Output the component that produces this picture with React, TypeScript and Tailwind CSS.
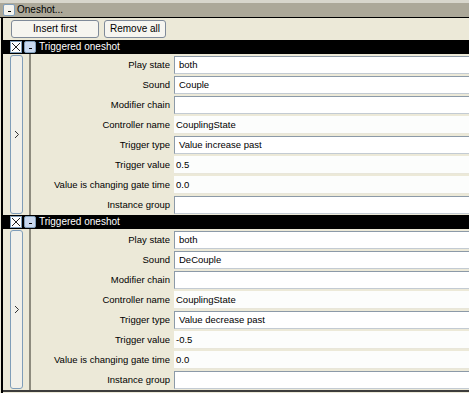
import React from "react";

type Prop = { label: string; value: string; box: boolean };

const sections: Prop[][] = [
  [
    { label: "Play state", value: "both", box: true },
    { label: "Sound", value: "Couple", box: true },
    { label: "Modifier chain", value: "", box: true },
    { label: "Controller name", value: "CouplingState", box: false },
    { label: "Trigger type", value: "Value increase past", box: true },
    { label: "Trigger value", value: "0.5", box: false },
    { label: "Value is changing gate time", value: "0.0", box: false },
    { label: "Instance group", value: "", box: true },
  ],
  [
    { label: "Play state", value: "both", box: true },
    { label: "Sound", value: "DeCouple", box: true },
    { label: "Modifier chain", value: "", box: true },
    { label: "Controller name", value: "CouplingState", box: false },
    { label: "Trigger type", value: "Value decrease past", box: true },
    { label: "Trigger value", value: "-0.5", box: false },
    { label: "Value is changing gate time", value: "0.0", box: false },
    { label: "Instance group", value: "", box: true },
  ],
];

function MinusBox({ blue }: { blue?: boolean }) {
  return (
    <div
      className={
        "w-[12px] h-[12px] flex items-center justify-center rounded-[2px] border " +
        (blue
          ? "border-[#7f9db9] bg-[#c9d8ef]"
          : "border-[#7f9db9] bg-[#f4f3ee]")
      }
    >
      <div className="w-[3px] h-[1px] bg-black mt-[3px]" />
    </div>
  );
}

function CheckX() {
  return (
    <div className="w-[12px] h-[12px] border border-[#7f9db9] bg-white flex items-center justify-center">
      <svg width="10" height="10" viewBox="0 0 10 10">
        <path d="M1 1 L9 9 M9 1 L1 9" stroke="#222" strokeWidth="1" />
      </svg>
    </div>
  );
}

function Row({ p }: { p: Prop }) {
  return (
    <div className="flex h-[20px]">
      <div className="w-[143px] shrink-0 flex items-center justify-end pr-[4px] text-black">
        {p.label}
      </div>
      {p.box ? (
        <div className="flex-1 mt-[1px] h-[18px] bg-white border-t border-l border-[#8c9aa8] border-b-[#c3cbd3] border-b flex items-center pl-[4px]">
          {p.value}
        </div>
      ) : (
        <div className="flex-1 mt-[1px] h-[18px] bg-[#fcfdfc] border-b border-[#e8e6da] flex items-center pl-[2px]">
          {p.value}
        </div>
      )}
    </div>
  );
}

function Section({ props }: { props: Prop[] }) {
  return (
    <div className="flex flex-col">
      <div className="h-[14px] bg-black flex items-center gap-[2px] pl-[7px]">
        <CheckX />
        <MinusBox blue />
        <span className="text-white ml-[1px] text-[10px]">Triggered oneshot</span>
      </div>
      <div className="flex h-[161px]">
        <div className="w-[28px] shrink-0 pl-[7px] py-[1px] border-r-2 border-[#8d8b7e]">
          <div className="w-[13px] h-full rounded-[3px] border border-[#7f9db9] bg-[#f1f0ea] flex items-center justify-center">
            <svg width="6" height="9" viewBox="0 0 6 9">
              <path d="M1 1 L4.5 4.5 L1 8" stroke="#333" strokeWidth="1" fill="none" />
            </svg>
          </div>
        </div>
        <div className="flex-1 flex flex-col pt-[1px]">
          {props.map((p, i) => (
            <Row key={i} p={p} />
          ))}
        </div>
      </div>
    </div>
  );
}

export default function App() {
  return (
    <div
      className="w-[469px] h-[393px] overflow-hidden bg-[#ece9d8] text-[9.5px] leading-none text-black"
      style={{ fontFamily: '"Liberation Sans", Arial, sans-serif' }}
    >
      <div className="h-[3px] bg-[#d8d6cc]" />
      <div className="h-[15px] bg-[#aca899] flex items-center pl-[3px] gap-[2px] border-b border-black">
        <MinusBox />
        <span className="text-[10px]">Oneshot...</span>
      </div>
      <div className="ml-[1px] border-l-[2px] border-black h-[375px] flex flex-col">
        <div className="h-[22px] flex items-center gap-[5px] pl-[8px]">
          <button className="w-[88px] h-[18px] rounded-[3px] border border-[#7f8a99] bg-[#f6f5f0] text-[10px]">
            Insert first
          </button>
          <button className="w-[62px] h-[18px] rounded-[3px] border border-[#7f8a99] bg-[#f6f5f0] text-[10px]">
            Remove all
          </button>
        </div>
        {sections.map((s, i) => (
          <Section key={i} props={s} />
        ))}
        <div className="h-[2px] bg-[#3c3c3c]" />
      </div>
    </div>
  );
}
